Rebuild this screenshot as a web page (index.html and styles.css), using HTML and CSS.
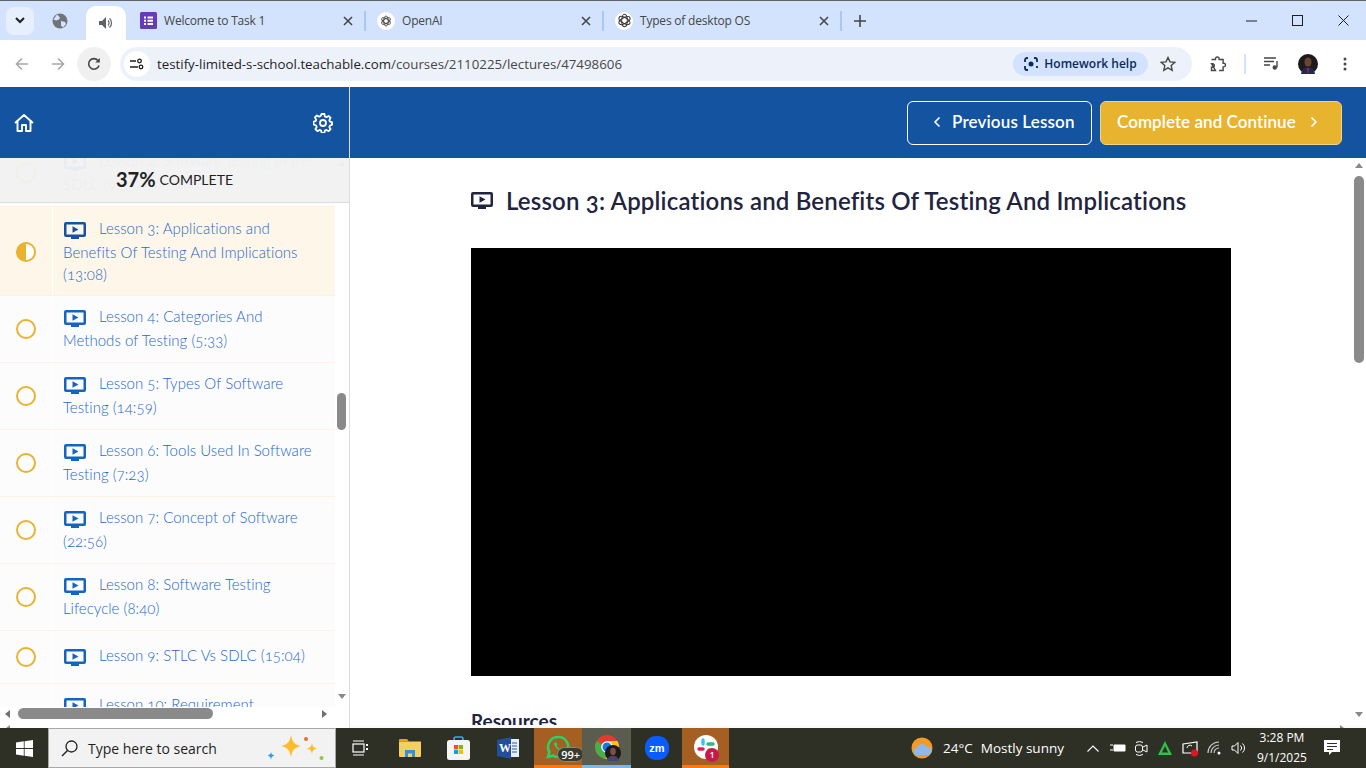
FILE: index.html
```html
<!DOCTYPE html>
<html lang="en">
<head>
  <meta charset="UTF-8" />
  <title>Lesson 3: Applications and Benefits Of Testing And Implications</title>
  <link rel="stylesheet" href="styles.css">
</head>
<body>
  <svg class="defs" width="0" height="0">
    <symbol id="play" viewBox="0 0 22 17">
      <path d="M2 0h18a2 2 0 0 1 2 2v11a2 2 0 0 1-2 2H2a2 2 0 0 1-2-2V2a2 2 0 0 1 2-2zm.500 2.500v10h17v-10z" fill="currentColor" fill-rule="evenodd"/>
      <path d="M8.500 4.300l6 3.200-6 3.200zM7 15h8v2H7z" fill="currentColor"/>
    </symbol>
    <symbol id="gpt" viewBox="0 0 16 16">
      <g fill="none" stroke="currentColor" stroke-width="1.100">
        <ellipse cx="8" cy="8" rx="3" ry="6.600"/>
        <ellipse cx="8" cy="8" rx="3" ry="6.600" transform="rotate(60 8 8)"/>
        <ellipse cx="8" cy="8" rx="3" ry="6.600" transform="rotate(120 8 8)"/>
      </g>
    </symbol>
    <symbol id="x" viewBox="0 0 10 10">
      <path d="M1 1l8 8M9 1L1 9" fill="none" stroke="currentColor" stroke-width="1.600"/>
    </symbol>
  </svg>

  <!-- Tab strip -->
  <div class="tabbar">
    <div class="tab-search">
      <svg width="10" height="7" viewBox="0 0 10 7"><path d="M1 1l4 4 4-4" fill="none" stroke="#1f1f1f" stroke-width="2"/></svg>
    </div>
    <div class="tab-pinned">
      <svg width="16" height="16" viewBox="0 0 16 16"><circle cx="8" cy="8" r="7.500" fill="#70757a"/><path d="M5 1.500l3 3-1 2-3 1-2.500-1zM9 8l4 1 1 2-3 3.500-2-2z" fill="#d3e3fd"/></svg>
    </div>
    <div class="tab-active">
      <svg width="14" height="12" viewBox="0 0 14 12"><path d="M0 4h3l4-4v12L3 8H0z" fill="#5f6368"/><path d="M9 3.500a3.500 3.500 0 0 1 0 5M10.500 1.500a6 6 0 0 1 0 9" fill="none" stroke="#5f6368" stroke-width="1.200"/></svg>
    </div>
    <div class="tab tab-first">
      <svg class="favicon" width="17" height="17" viewBox="0 0 17 17"><rect width="17" height="17" rx="1.500" fill="#673ab7"/><path d="M4 4.500h2v2H4zM7.500 4.500H13v2H7.500zM4 7.800h2v2H4zM7.500 7.800H13v2H7.500zM4 11h2v2H4zM7.500 11H13v2H7.500z" fill="#fff"/></svg>
      <span class="tab-title">Welcome to Task 1</span>
      <svg class="tab-close" width="10" height="10"><use href="#x"/></svg>
    </div>
    <div class="tab">
      <span class="favicon-round"><svg width="12" height="12"><use href="#gpt"/></svg></span>
      <span class="tab-title">OpenAI</span>
      <svg class="tab-close" width="10" height="10"><use href="#x"/></svg>
    </div>
    <div class="tab">
      <span class="favicon-round"><svg width="15" height="15"><use href="#gpt"/></svg></span>
      <span class="tab-title">Types of desktop OS</span>
      <svg class="tab-close" width="10" height="10"><use href="#x"/></svg>
    </div>
    <svg class="new-tab" width="12" height="12" viewBox="0 0 12 12"><path d="M6 0v12M0 6h12" stroke="#444746" stroke-width="1.600"/></svg>
    <div class="window-controls">
      <svg width="11" height="11" viewBox="0 0 11 11"><path d="M0 6h11" stroke="#1f1f1f"/></svg>
      <svg width="11" height="11" viewBox="0 0 11 11"><rect x=".5" y=".5" width="10" height="10" fill="none" stroke="#1f1f1f"/></svg>
      <svg width="11" height="11" viewBox="0 0 11 11"><path d="M.5.5l10 10M10.500.5l-10 10" stroke="#1f1f1f"/></svg>
    </div>
  </div>

  <!-- Toolbar -->
  <div class="toolbar">
    <svg class="nav-icon" width="14" height="14" viewBox="0 0 14 14"><path d="M13 7H2M7 1.500L1.500 7 7 12.500" fill="none" stroke="#a5a8ad" stroke-width="1.600"/></svg>
    <svg class="nav-icon" width="14" height="14" viewBox="0 0 14 14"><path d="M1 7h11M7 1.500L12.500 7 7 12.500" fill="none" stroke="#a5a8ad" stroke-width="1.600"/></svg>
    <div class="reload">
      <svg width="14" height="14" viewBox="0 0 14 14"><path d="M12 8.500A5.300 5.300 0 1 1 11 3.500" fill="none" stroke="#444746" stroke-width="1.600"/><path d="M12.800 1v4.500H8.300z" fill="#444746"/></svg>
    </div>
    <div class="omnibox">
      <span class="site-info">
        <svg width="14" height="12" viewBox="0 0 14 12"><g fill="none" stroke="#1f1f1f" stroke-width="1.300"><path d="M0 3h6M0 9h8"/><circle cx="9.500" cy="3" r="1.800"/><circle cx="11" cy="9" r="1.800"/></g></svg>
      </span>
      <span class="url">testify-limited-s-school.teachable.com<span class="url-path">/courses/2110225/lectures/47498606</span></span>
      <span class="homework">
        <svg width="14" height="14" viewBox="0 0 14 14"><path d="M1 5V3a2 2 0 0 1 2-2h1M10 1h1a2 2 0 0 1 2 2v2M1 9v2a2 2 0 0 0 2 2h1M13 9v2" fill="none" stroke="#0b2a5c" stroke-width="1.800"/><circle cx="7" cy="7" r="2.500" fill="#0b2a5c"/></svg>
        Homework help
      </span>
      <svg class="star" width="16" height="16" viewBox="0 0 16 16"><path d="M8 1.500l2 4.400 4.700.5-3.500 3.200 1 4.700L8 11.900l-4.200 2.400 1-4.700L1.300 6.400 6 5.900z" fill="none" stroke="#444746" stroke-width="1.400"/></svg>
    </div>
    <svg class="ext" width="16" height="16" viewBox="0 0 16 16"><path d="M1.500 3.500h4V2.800a1.800 1.800 0 0 1 3.600 0v.7h4v3.800h.6a1.800 1.800 0 0 1 0 3.600h-.6v3.600h-4M5.500 14.500h-4v-3.200h1a1.800 1.800 0 0 0 0-3.600h-1z" fill="none" stroke="#444746" stroke-width="1.400"/></svg>
    <span class="toolbar-sep"></span>
    <svg class="media" width="15" height="13" viewBox="0 0 15 13"><path d="M0 1h12M0 4.500h10M0 8h6" stroke="#444746" stroke-width="1.400"/><path d="M13 4v6.500" stroke="#444746" stroke-width="1.400"/><circle cx="10.800" cy="10.500" r="2.200" fill="#444746"/></svg>
    <svg class="avatar" width="20" height="20" viewBox="0 0 20 20"><circle cx="10" cy="10" r="10" fill="#1d1a1c"/><ellipse cx="10" cy="8" rx="3.500" ry="4.500" fill="#6b4434"/><path d="M3 20c1-6 4-6.500 7-6.500s6 .5 7 6.500z" fill="#1f2c52"/><path d="M9 14h2l-.5 5h-1z" fill="#b3242c"/></svg>
    <svg class="menu" width="4" height="14" viewBox="0 0 4 14"><g fill="#444746"><circle cx="2" cy="2" r="1.500"/><circle cx="2" cy="7" r="1.500"/><circle cx="2" cy="12" r="1.500"/></g></svg>
  </div>

  <div class="app">
    <!-- Course sidebar -->
    <aside class="sidebar">
      <div class="side-head">
        <svg width="20" height="20" viewBox="0 0 20 20"><path d="M1 10l9-8 9 8M3.500 8v10h4.500v-6h4v6h4.500V8" fill="none" stroke="#fff" stroke-width="1.900" stroke-linejoin="round"/></svg>
        <svg width="20" height="20" viewBox="0 0 20 20"><g fill="none" stroke="#fff" stroke-width="1.800"><circle cx="10" cy="10" r="3"/><path d="M8.600 1h2.800l.5 2.500 1.500.7 2.200-1.300 2 2-1.300 2.200.6 1.500 2.100.6v2.700l-2.100.6-.6 1.500 1.300 2.200-2 2-2.200-1.300-1.500.6-.5 2.500H8.600l-.5-2.500-1.500-.6-2.200 1.300-2-2 1.300-2.200-.6-1.500L.5 11.400V8.700l2.100-.6.600-1.500-1.300-2.200 2-2 2.200 1.300 1.500-.7z" stroke-linejoin="round"/></g></svg>
      </div>
      <div class="side-body">
        <div class="side-view">
          <ul class="lessons">
            <li class="lesson">
              <span class="status"><span class="ring"></span></span>
              <a class="lesson-name"><svg class="play"><use href="#play"/></svg>Lesson 2: Software Testing In the SDLC (9:33)</a>
            </li>
            <li class="lesson lesson-current">
              <span class="status"><span class="ring ring-half"></span></span>
              <a class="lesson-name"><svg class="play"><use href="#play"/></svg>Lesson 3: Applications and Benefits Of Testing And Implications (13:08)</a>
            </li>
            <li class="lesson">
              <span class="status"><span class="ring"></span></span>
              <a class="lesson-name"><svg class="play"><use href="#play"/></svg>Lesson 4: Categories And Methods of Testing (5:33)</a>
            </li>
            <li class="lesson">
              <span class="status"><span class="ring"></span></span>
              <a class="lesson-name"><svg class="play"><use href="#play"/></svg>Lesson 5: Types Of Software Testing (14:59)</a>
            </li>
            <li class="lesson">
              <span class="status"><span class="ring"></span></span>
              <a class="lesson-name"><svg class="play"><use href="#play"/></svg>Lesson 6: Tools Used In Software Testing (7:23)</a>
            </li>
            <li class="lesson">
              <span class="status"><span class="ring"></span></span>
              <a class="lesson-name"><svg class="play"><use href="#play"/></svg>Lesson 7: Concept of Software (22:56)</a>
            </li>
            <li class="lesson">
              <span class="status"><span class="ring"></span></span>
              <a class="lesson-name"><svg class="play"><use href="#play"/></svg>Lesson 8: Software Testing Lifecycle (8:40)</a>
            </li>
            <li class="lesson lesson-short">
              <span class="status"><span class="ring"></span></span>
              <a class="lesson-name"><svg class="play"><use href="#play"/></svg>Lesson 9: STLC Vs SDLC (15:04)</a>
            </li>
            <li class="lesson">
              <span class="status"><span class="ring"></span></span>
              <a class="lesson-name"><svg class="play"><use href="#play"/></svg>Lesson 10: Requirement<br>Analysis (10:12)</a>
            </li>
          </ul>
          <div class="side-vscroll">
            <span class="arrow arrow-up"></span>
            <span class="side-thumb"></span>
            <span class="arrow arrow-down"></span>
          </div>
          <div class="progress"><b>37%</b> COMPLETE</div>
        </div>
        <div class="side-hscroll">
          <span class="arrow arrow-left"></span>
          <span class="hthumb"></span>
          <span class="arrow arrow-right"></span>
        </div>
        <div class="side-strip"><span class="corner"></span></div>
      </div>
    </aside>

    <!-- Lecture -->
    <main class="main">
      <div class="main-head">
        <a class="btn btn-prev">
          <svg width="8" height="12" viewBox="0 0 8 12"><path d="M6.500 1.500L2 6l4.500 4.500" fill="none" stroke="#fff" stroke-width="1.600"/></svg>
          Previous Lesson
        </a>
        <a class="btn btn-next">
          Complete and Continue
          <svg width="8" height="12" viewBox="0 0 8 12"><path d="M1.500 1.500L6 6l-4.500 4.500" fill="none" stroke="#fff" stroke-width="1.600"/></svg>
        </a>
      </div>
      <div class="main-body">
        <div class="content">
          <h2 class="lecture-title"><svg class="title-icon"><use href="#play"/></svg>Lesson 3: Applications and Benefits Of Testing And Implications</h2>
          <div class="video"></div>
          <h3 class="resources">Resources</h3>
        </div>
        <div class="main-vscroll">
          <span class="arrow arrow-up"></span>
          <span class="main-thumb"></span>
          <span class="arrow arrow-down"></span>
        </div>
      </div>
      <div class="main-strip"><span class="corner"></span></div>
    </main>
  </div>

  <!-- Windows taskbar -->
  <div class="taskbar">
    <div class="start">
      <svg width="17" height="17" viewBox="0 0 17 17"><path d="M0 2.400L7.800 1.300V8H0zM8.600 1.200L17 0v8H8.600zM0 8.900h7.800v6.800L0 14.600zM8.600 8.900H17V17l-8.400-1.200z" fill="#fff"/></svg>
    </div>
    <div class="search">
      <svg width="17" height="17" viewBox="0 0 17 17"><circle cx="10.500" cy="6.500" r="5.500" fill="none" stroke="#222" stroke-width="1.300"/><path d="M6.500 10.500L1 16" stroke="#222" stroke-width="1.500"/></svg>
      <span class="search-text">Type here to search</span>
      <svg class="sparkles" width="62" height="28" viewBox="0 0 62 28"><path d="M26 0c1.500 7 3 9 9.500 11-6.500 2-8 4-9.500 11-1.500-7-3-9-9.500-11C23 9 24.500 7 26 0z" fill="#fdbd2a"/><path d="M47 8c.7 3.500 1.500 4.500 5 5.500-3.500 1-4.300 2-5 5.500-.7-3.500-1.500-4.500-5-5.500 3.500-1 4.300-2 5-5.500z" fill="#fdbd2a"/><path d="M6 17c.4 2 1 2.600 3.500 3.500C7 21.400 6.400 22 6 25c-.4-3-1-3.600-3.500-4.500C5 19.600 5.600 19 6 17z" fill="#2b9fe8"/><circle cx="41" cy="4" r="2" fill="#ee6a30"/><circle cx="56.500" cy="23" r="2" fill="#8fc93a"/></svg>
    </div>
    <div class="task">
      <svg width="17" height="16" viewBox="0 0 17 16"><g fill="none" stroke="#fff" stroke-width="1.200"><path d="M1 1h11M1 15h11"/><rect x="1" y="4" width="11" height="8"/></g><path d="M14 4h2v2h-2zM14 8h2v2h-2z" fill="#fff"/></svg>
    </div>
    <div class="task">
      <svg width="22" height="18" viewBox="0 0 22 18"><path d="M0 1a1 1 0 0 1 1-1h7l2 2.500H0z" fill="#e0a526"/><path d="M0 2.500h22V17a1 1 0 0 1-1 1H1a1 1 0 0 1-1-1z" fill="#f6cf60"/><path d="M6 11h10v7h-3v-3.500H9V18H6z" fill="#2f93d6"/></svg>
    </div>
    <div class="task">
      <svg width="23" height="24" viewBox="0 0 23 24"><path d="M7 5V3a2 2 0 0 1 2-2h5a2 2 0 0 1 2 2v2" fill="none" stroke="#2bb3e8" stroke-width="1.600"/><rect y="4" width="23" height="20" rx="2.500" fill="#f4f4f4"/><path d="M7 9h4.200v4.200H7z" fill="#f25022"/><path d="M11.800 9H16v4.200h-4.200z" fill="#7fba00"/><path d="M7 13.800h4.200V18H7z" fill="#00a4ef"/><path d="M11.800 13.800H16V18h-4.200z" fill="#ffb900"/></svg>
    </div>
    <div class="task task-wide">
      <svg width="23" height="22" viewBox="0 0 23 22"><path d="M13 2h9v18h-9z" fill="#e8eef8"/><path d="M15 6h5M15 9h5M15 12h5M15 15h5" stroke="#2b5fa8"/><path d="M0 3l14-3v22L0 19z" fill="#214f9e"/><text class="word-w" x="2" y="14.500">W</text></svg>
    </div>
    <div class="task task-alert task-wa">
      <svg class="wa" width="24" height="24" viewBox="0 0 24 24"><path d="M12 2a10 10 0 0 0-8.600 15L2 22l5.200-1.400A10 10 0 1 0 12 2z" fill="none" stroke="#25d366" stroke-width="2.600"/><path d="M8.500 7.500c-1 1 0 4 2.500 6.200 2.300 2 4.800 2.500 5.500 1.500l.6-1.200-2.500-1.300-1 1c-1.200-.4-2.600-1.800-3-3l1-1-1.200-2.500z" fill="#25d366"/></svg>
      <span class="badge-count">99+</span>
    </div>
    <div class="task task-open">
      <svg width="24" height="24" viewBox="0 0 24 24"><circle cx="12" cy="12" r="12" fill="#e33b2e"/><path d="M12 12L1.600 6A12 12 0 0 0 9 23.600z" fill="#4aae48"/><path d="M12 12l-3 11.600A12 12 0 0 0 22.400 6H12z" fill="#fbc116"/><path d="M12 12l-1.200 11.900A12 12 0 0 1 9 23.600z" fill="#4aae48"/><circle cx="12" cy="12" r="5.800" fill="#fff"/><circle cx="12" cy="12" r="4.500" fill="#1a73e8"/></svg>
      <svg class="task-avatar" width="16" height="16" viewBox="0 0 20 20"><circle cx="10" cy="10" r="10" fill="#1d1a1c"/><ellipse cx="10" cy="8" rx="3.500" ry="4.500" fill="#7a5040"/><path d="M3 20c1-6 4-6.500 7-6.500s6 .5 7 6.500z" fill="#3a4a74"/><path d="M9 14h2l-.5 5h-1z" fill="#b3242c"/></svg>
    </div>
    <div class="task task-wide">
      <svg width="24" height="24" viewBox="0 0 24 24"><rect width="24" height="24" rx="11" fill="#0b5cff"/><text class="zoom-mark" x="12" y="16" text-anchor="middle">zm</text></svg>
    </div>
    <div class="task task-alert task-slack">
      <svg width="24" height="24" viewBox="0 0 24 24"><circle cx="12" cy="12" r="12" fill="#fff"/><g stroke-width="3.400" stroke-linecap="round"><path d="M9 5v4" stroke="#36c5f0"/><path d="M5 14h4" stroke="#e01e5a"/><path d="M15 19v-4" stroke="#ecb22e"/><path d="M14 9h5" stroke="#2eb67d"/></g></svg>
      <span class="badge-one">1</span>
    </div>
    <div class="tray">
      <svg width="22" height="22" viewBox="0 0 22 22"><circle cx="11" cy="11" r="10.500" fill="#f59a23"/><path d="M6 18a3.500 3.500 0 0 1 0-7 5 5 0 0 1 9.500-1 4 4 0 0 1 2 8z" fill="#8fb8ea"/></svg>
      <span class="weather-temp">24°C</span>
      <span class="weather-text">Mostly sunny</span>
      <svg class="tray-chevron" width="12" height="7" viewBox="0 0 12 7"><path d="M.5 6.500L6 1l5.500 5.500" fill="none" stroke="#fff" stroke-width="1.100"/></svg>
      <svg class="tray-battery" width="16" height="10" viewBox="0 0 16 10"><rect x="3.500" y="1.500" width="12" height="7" rx="1" fill="#fff"/><path d="M0 2h3M0 7h3" stroke="#fff"/></svg>
      <svg width="14" height="17" viewBox="0 0 14 17"><g fill="none" stroke="#fff"><rect x="1.500" y="5" width="7" height="7" rx="2"/><path d="M9 7l4-2v7l-4-2M2 2.500a7 7 0 0 1 7 0M2 14.500a7 7 0 0 0 7 0"/></g></svg>
      <svg class="tray-shift" width="16" height="16" viewBox="0 0 16 16"><path d="M8 1l7 14H1zm0 5l-3.200 6.500h6.400z" fill="#2fc24a"/></svg>
      <svg class="tray-shift" width="17" height="17" viewBox="0 0 17 17"><path d="M1 4l14-2v11H1z" fill="none" stroke="#fff" stroke-width="1.200"/><path d="M5 8a3 3 0 0 1 5-2" fill="none" stroke="#fff"/><circle cx="12.500" cy="13" r="3.500" fill="#e81123"/></svg>
      <svg width="16" height="14" viewBox="0 0 16 14"><g fill="none" stroke="#cfcfcf" stroke-width="1.100"><path d="M1 12A11 11 0 0 1 12 1M4 12a8 8 0 0 1 8-8M7 12a5 5 0 0 1 5-5"/></g><circle cx="12" cy="12" r="1.500" fill="#fff"/></svg>
      <svg width="16" height="14" viewBox="0 0 16 14"><path d="M1 5h2.500L7 1.500v11L3.500 9H1z" fill="none" stroke="#fff"/><path d="M9.500 4.500a3.500 3.500 0 0 1 0 5M11.500 2.500a6 6 0 0 1 0 9" fill="none" stroke="#fff"/></svg>
      <div class="clock"><span>3:28 PM</span><span>9/1/2025</span></div>
      <svg class="notify" width="16" height="16" viewBox="0 0 16 16"><path d="M0 0h16v12H8l-3 3v-3H0z" fill="#fff"/><path d="M3 3.500h10M3 6.500h10M3 9.500h6" stroke="#2f3025"/></svg>
    </div>
  </div>
</body>
</html>
```
FILE: styles.css
```css
* {
  box-sizing: border-box;
}

html, body {
  margin: 0;
  height: 100%;
}

body {
  display: flex;
  flex-direction: column;
  height: 768px;
  overflow: hidden;
  font-family: "Open Sans", sans-serif;
  background: #fff;
}

.defs {
  position: absolute;
}

/* tab strip */
.tabbar {
  height: 40px;
  flex: none;
  display: flex;
  align-items: center;
  background: #d3e3fd;
  border-top: 1px solid #5f6368;
  color: #444746;
  font-size: 12px;
}

.tab-search {
  width: 28px;
  height: 28px;
  margin-left: 6px;
  border-radius: 8px;
  background: #e7effc;
  display: flex;
  align-items: center;
  justify-content: center;
}

.tab-pinned {
  width: 52px;
  display: flex;
  justify-content: center;
}

.tab-active {
  width: 40px;
  height: 34px;
  align-self: flex-end;
  background: #fff;
  border-radius: 10px 10px 0 0;
  display: flex;
  align-items: center;
  justify-content: center;
}

.tab {
  width: 238px;
  padding: 0 11px 0 11px;
  display: flex;
  align-items: center;
  border-right: 2px solid #a8c7fa;
  height: 20px;
}

.tab-first {
  width: 240px;
  padding-left: 14px;
}

.favicon {
  margin-right: 7px;
}

.favicon-round {
  width: 18px;
  height: 18px;
  margin-right: 7px;
  border-radius: 50%;
  background: #fff;
  color: #333;
  display: flex;
  align-items: center;
  justify-content: center;
}

.tab-title {
  flex: 1;
  white-space: nowrap;
  letter-spacing: -0.2px;
}

.tab-close {
  color: #444746;
}

.new-tab {
  margin-left: 12px;
}

.window-controls {
  margin-left: auto;
  width: 138px;
  margin-right: 0;
  display: flex;
  justify-content: space-around;
}

/* toolbar */
.toolbar {
  height: 47px;
  flex: none;
  display: flex;
  align-items: center;
  background: #fff;
  position: relative;
}

.nav-icon {
  margin-left: 15px;
  margin-right: 7px;
}

.reload {
  width: 34px;
  height: 34px;
  margin-left: 5px;
  border-radius: 50%;
  background: #f0f0f0;
  display: flex;
  align-items: center;
  justify-content: center;
}

.omnibox {
  width: 1072px;
  height: 34px;
  margin-left: 9px;
  border-radius: 17px;
  background: #edf2fa;
  display: flex;
  align-items: center;
  padding-left: 4px;
}

.site-info {
  width: 26px;
  height: 26px;
  border-radius: 50%;
  background: #fff;
  display: flex;
  align-items: center;
  justify-content: center;
}

.url {
  margin-left: 7px;
  font-size: 13.3px;
  color: #1f1f1f;
  white-space: nowrap;
}

.url-path {
  color: #474747;
}

.homework {
  margin-left: auto;
  height: 24px;
  width: 135px;
  border-radius: 12px;
  background: #d3e3fd;
  display: flex;
  align-items: center;
  justify-content: center;
  gap: 6px;
  font-size: 12px;
  font-weight: 600;
  color: #0b2a5c;
}

.star {
  margin: 0 16px 0 12px;
}

.ext {
  margin-left: 18px;
}

.toolbar-sep {
  width: 2px;
  height: 20px;
  margin-left: 18px;
  background: #d3e3fd;
}

.media {
  margin-left: 18px;
}

.avatar {
  margin-left: 19px;
}

.menu {
  margin-left: 25px;
}

/* page */
.app {
  flex: 1;
  min-height: 0;
  display: flex;
}

.sidebar {
  width: 350px;
  flex: none;
  display: flex;
  flex-direction: column;
  border-right: 1px solid #dcdcdc;
}

.side-head {
  height: 71px;
  flex: none;
  padding: 0 16px 0 14px;
  display: flex;
  align-items: center;
  justify-content: space-between;
  background: #14539f;
  margin-right: -1px;
  border-right: 1px solid #d8e2f0;
}

.side-body {
  flex: 1;
  min-height: 0;
  display: flex;
  flex-direction: column;
}

.side-view {
  flex: 1;
  min-height: 0;
  display: flex;
  position: relative;
  overflow: hidden;
}

.lessons {
  width: 335px;
  flex: none;
  margin: -18px 0 0;
  padding: 0;
  list-style: none;
}

.lesson {
  display: flex;
  min-height: 67px;
  background: #fcfcfc;
  border-bottom: 1px solid #fbf4e3;
}

.lesson-current {
  background: #fef6e9;
  min-height: 89px;
}

.lesson-current .status {
  padding-top: 2px;
}

.lesson-short {
  min-height: 53px;
}

.status {
  width: 53px;
  flex: none;
  display: flex;
  align-items: center;
  justify-content: center;
  border-right: 1px solid #fff;
  padding-right: 1px;
}

.ring {
  width: 20px;
  height: 20px;
  border: 2px solid #e8b32f;
  border-radius: 50%;
}

.ring-half {
  background: linear-gradient(90deg, #e8b32f 50%, #fff 50%);
}

.lesson-name {
  flex: 1;
  align-self: center;
  padding: 0 14px 2px 10px;
  font-family: Lato, sans-serif;
  font-size: 15px;
  font-weight: 300;
  line-height: 22px;
  letter-spacing: 0.03px;
  color: #2568cc;
  font-variant-numeric: oldstyle-nums;
}

.lesson-current .lesson-name {
  padding-bottom: 0;
}

.play {
  width: 22px;
  height: 17px;
  margin: 0 13px 2px 1px;
  vertical-align: -7px;
  color: #1565c0;
}

.lesson-current .play {
  color: #14539f;
}

.side-vscroll {
  flex: 1;
  position: relative;
  background: #fff;
  display: flex;
  flex-direction: column;
  align-items: center;
  padding: 3px 1px 0 0;
}

.side-thumb {
  width: 9px;
  height: 37px;
  margin-top: 227px;
  border-radius: 5px;
  background: #8a8a8a;
}

.arrow {
  display: block;
  width: 0;
  height: 0;
  border: 4px solid transparent;
}

.arrow-up {
  border-top: 0;
  border-bottom: 5px solid #8a8a8a;
}

.arrow-down {
  border-bottom: 0;
  border-top: 5px solid #8a8a8a;
  margin-top: auto;
  margin-bottom: 8px;
}

.arrow-left {
  border-left: 0;
  border-right: 5px solid #707070;
}

.arrow-right {
  border-right: 0;
  border-left: 5px solid #707070;
}

.progress {
  position: absolute;
  top: 0;
  left: 0;
  right: 0;
  height: 45px;
  padding-bottom: 2px;
  background: rgba(241, 241, 241, 0.96);
  border-bottom: 1px solid #dcdcdc;
  display: flex;
  align-items: center;
  justify-content: center;
  gap: 4px;
  font-family: Lato, sans-serif;
  font-size: 14px;
  color: #222;
}

.progress b {
  font-size: 20px;
  font-weight: 700;
}

.side-hscroll {
  height: 14px;
  flex: none;
  display: flex;
  align-items: center;
  justify-content: space-between;
  padding: 0 22px 0 5px;
  background: #fff;
  position: relative;
}

.hthumb {
  position: absolute;
  left: 18px;
  top: 1px;
  width: 195px;
  height: 11px;
  border-radius: 6px;
  background: #8a8a8a;
}

.side-strip {
  height: 7px;
  flex: none;
  padding-left: 6px;
  display: flex;
  align-items: flex-end;
  background: #fff;
}

.corner {
  width: 0;
  height: 0;
  border-bottom: 3px solid #8a8a8a;
  border-left: 4px solid transparent;
}

.main-strip .corner {
  border-left: 0;
  border-right: 4px solid transparent;
}

.main {
  flex: 1;
  min-width: 0;
  display: flex;
  flex-direction: column;
}

.main-head {
  height: 71px;
  flex: none;
  padding: 0 24px 0 0;
  display: flex;
  align-items: center;
  justify-content: flex-end;
  gap: 8px;
  background: #14539f;
}

.btn {
  height: 44px;
  padding-bottom: 2px;
  display: flex;
  align-items: center;
  border: 1px solid #fff;
  border-radius: 6px;
  font-family: Lato, sans-serif;
  font-size: 17px;
  font-weight: 600;
  letter-spacing: 0.05px;
  color: #fff;
}

.btn-prev {
  width: 185px;
  padding-left: 25px;
  gap: 11px;
  letter-spacing: 0.15px;
}

.btn-next {
  width: 242px;
  padding-left: 16px;
  gap: 14px;
  background: #e8b32f;
  border-color: #f0d48a;
}

.main-body {
  flex: 1;
  min-height: 0;
  display: flex;
}

.main-strip {
  height: 3px;
  flex: none;
  padding-right: 22px;
  display: flex;
  justify-content: flex-end;
  background: #fafafa;
}

.content {
  flex: 1;
  padding: 26px 0 0 121px;
  overflow: hidden;
}

.lecture-title {
  margin: 0;
  height: 32px;
  display: flex;
  align-items: center;
  gap: 13px;
  font-family: Lato, sans-serif;
  font-size: 24px;
  font-weight: 600;
  letter-spacing: 0.18px;
  color: #22243f;
  white-space: nowrap;
  font-variant-numeric: oldstyle-nums;
}

.title-icon {
  width: 22px;
  height: 17px;
  color: #22243f;
}

.video {
  width: 760px;
  height: 428px;
  margin-top: 32px;
  background: #000;
}

.resources {
  margin: 35px 0 0;
  font-family: Lato, sans-serif;
  font-size: 19px;
  font-weight: 700;
  line-height: 20px;
  color: #22243f;
}

.main-vscroll {
  width: 14px;
  flex: none;
  display: flex;
  flex-direction: column;
  align-items: center;
  padding-top: 5px;
  background: #fff;
}

.main-thumb {
  width: 10px;
  height: 187px;
  margin-top: 8px;
  border-radius: 5px;
  background: #8a8a8a;
}

/* taskbar */
.taskbar {
  height: 40px;
  flex: none;
  display: flex;
  align-items: stretch;
  background: #2f3025;
  color: #fff;
  font-family: "Open Sans", sans-serif;
}

.start {
  width: 48px;
  display: flex;
  align-items: center;
  justify-content: center;
}

.search {
  width: 288px;
  margin-right: 0;
  padding-left: 12px;
  display: flex;
  align-items: center;
  background: #f2f2f2;
  border: 1px solid #a8a8a8;
  color: #1f1f1f;
  font-size: 14px;
  position: relative;
}

.search-text {
  margin-left: 10px;
}

.sparkles {
  position: absolute;
  right: 8px;
  top: 6px;
}

.task {
  width: 49px;
  display: flex;
  align-items: center;
  justify-content: center;
  position: relative;
}

.task-wide {
  width: 51px;
}

.task-alert {
  background: #a65f22;
  border-bottom: 3px solid #f47b16;
}

.task-wa {
  width: 48px;
}

.task-slack {
  width: 47px;
}

.task-open {
  background: #5a5c4d;
  border-bottom: 3px solid #76b9ed;
}

.word-w {
  font-family: "Liberation Serif", serif;
  font-size: 12px;
  font-weight: 700;
  fill: #fff;
}

.zoom-mark {
  font-family: "Liberation Sans", sans-serif;
  font-size: 11px;
  font-weight: 700;
  fill: #fff;
}

.badge-count {
  position: absolute;
  right: -2px;
  bottom: 3px;
  padding: 0 3px;
  border: 1px solid #8a8a7a;
  border-radius: 8px;
  background: #3a3a30;
  font-size: 11px;
  font-weight: 600;
  line-height: 13px;
}

.task-avatar {
  position: absolute;
  right: 10px;
  bottom: 4px;
}

.badge-one {
  width: 14px;
  height: 14px;
  position: absolute;
  right: 10px;
  bottom: 3px;
  border-radius: 50%;
  background: #c9184a;
  font-size: 9px;
  font-weight: 600;
  line-height: 14px;
  text-align: center;
}

.tray {
  flex: 1;
  display: flex;
  align-items: center;
  font-size: 13.5px;
  padding-left: 182px;
  gap: 8px;
}

.weather-temp {
  margin-left: 2px;
}

.weather-text {
  margin-right: 15px;
}

.tray-battery {
  margin-left: 3px;
}

.tray-shift {
  margin-left: 1px;
}

.clock {
  width: 62px;
  margin-left: -4px;
  display: flex;
  flex-direction: column;
  align-items: center;
  font-size: 12px;
  line-height: 20px;
}

.notify {
  margin-left: 3px;
}
```
